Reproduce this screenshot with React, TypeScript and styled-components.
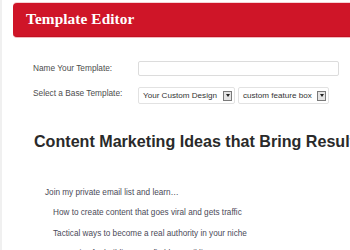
import * as React from "react";
import styled, { createGlobalStyle } from "styled-components";

const GlobalStyle = createGlobalStyle`
  html, body {
    margin: 0;
    padding: 0;
    background: #ffffff;
  }
  body {
    font-family: "Liberation Sans", Arial, sans-serif;
  }
`;

const Page = styled.div`
  width: 350px;
  height: 250px;
  overflow: hidden;
  box-sizing: border-box;
  border-left: 2px solid #f0f0f0;
  background: #fff;
`;

const TitleBar = styled.div`
  margin: 3px -20px 0 11px;
  height: 33px;
  display: flex;
  align-items: center;
  padding-left: 13px;
  background: #cf1528;
  border-radius: 4px 0 0 4px;
  border-bottom: 1px solid #c20f20;
  box-shadow: 0 1px 0 #f3b9be, 0 -1px 0 #f6d2d5;
`;

const Title = styled.h1`
  margin: -1px 0 0 0;
  font-family: "Liberation Serif", "Times New Roman", serif;
  font-weight: bold;
  font-size: 15.3px;
  color: #fff;
  letter-spacing: 0.1px;
`;

const Form = styled.div`
  display: grid;
  grid-template-columns: 105px 1fr;
  row-gap: 11px;
  align-items: center;
  padding-left: 31px;
  margin-top: 24px;
`;

const Label = styled.label<{ $shift?: number }>`
  font-size: 8.3px;
  color: #4d4d4d;
  margin-top: ${(p) => p.$shift ?? 0}px;
`;

const TextInput = styled.div`
  width: 199px;
  height: 13px;
  border: 1px solid #dcdcdc;
  border-radius: 2px;
  background: #fff;
`;

const SelectRow = styled.div`
  display: flex;
  gap: 3px;
`;

const Select = styled.div<{ $w: number }>`
  width: ${(p) => p.$w}px;
  height: 17px;
  box-sizing: border-box;
  border: 1px solid #e2e2e2;
  border-radius: 2px;
  display: flex;
  align-items: center;
  justify-content: space-between;
  padding: 0 2px 0 4px;
  font-size: 8.1px;
  color: #333;
  background: #fff;
`;

const Arrow = styled.span`
  width: 7px;
  height: 8px;
  border: 1px solid #7a7a7a;
  background: #e4e4e4;
  display: flex;
  align-items: center;
  justify-content: center;
  &::after {
    content: "";
    border-left: 2.5px solid transparent;
    border-right: 2.5px solid transparent;
    border-top: 3px solid #222;
  }
`;

const Heading = styled.h2`
  margin: 28px 0 0 32px;
  font-size: 16.1px;
  line-height: 18px;
  font-weight: bold;
  color: #2a2a2a;
  white-space: nowrap;
`;

const Body = styled.div`
  margin-top: 33px;
  font-size: 8.2px;
  line-height: 20.4px;
  color: #4a4a58;
`;

const Intro = styled.p`
  margin: 0 0 0 43px;
`;

const Item = styled.p`
  margin: 0 0 0 51px;
  white-space: nowrap;
`;

export default function App() {
  return (
    <Page>
      <GlobalStyle />
      <TitleBar>
        <Title>Template Editor</Title>
      </TitleBar>
      <Form>
        <Label $shift={-1}>Name Your Template:</Label>
        <TextInput />
        <Label $shift={-6}>Select a Base Template:</Label>
        <SelectRow>
          <Select $w={97}>
            <span>Your Custom Design</span>
            <Arrow />
          </Select>
          <Select $w={91}>
            <span>custom feature box</span>
            <Arrow />
          </Select>
        </SelectRow>
      </Form>
      <Heading>Content Marketing Ideas that Bring Results</Heading>
      <Body>
        <Intro>Join my private email list and learn…</Intro>
        <Item>How to create content that goes viral and gets traffic</Item>
        <Item>Tactical ways to become a real authority in your niche</Item>
        <Item>Strategies for building a profitable email list</Item>
      </Body>
    </Page>
  );
}
